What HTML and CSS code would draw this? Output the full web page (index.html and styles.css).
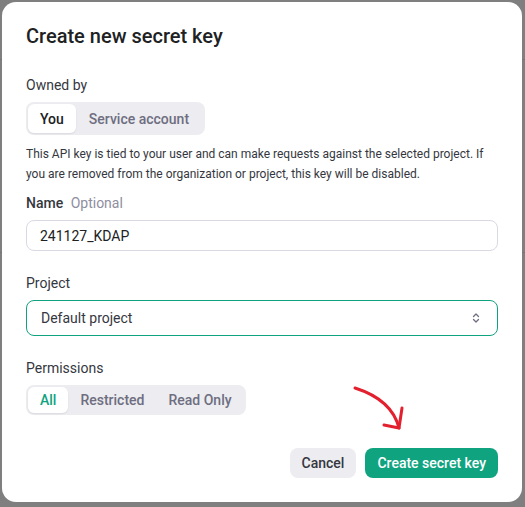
FILE: index.html
```html
<!DOCTYPE html>
<html lang="en">
<head>
<meta charset="utf-8">
<title>Create new secret key</title>
<link rel="stylesheet" href="styles.css">
</head>
<body>
<div class="backdrop">
  <div class="modal">
    <h1 class="title">Create new secret key</h1>

    <div class="field">
      <div class="label">Owned by</div>
      <div class="segmented seg-owner">
        <span class="seg active">You</span>
        <span class="seg">Service account</span>
      </div>
    </div>

    <p class="desc">This API key is tied to your user and can make requests against the selected project. If you are removed from the organization or project, this key will be disabled.</p>

    <div class="field name-field">
      <div class="label">Name <span class="optional">Optional</span></div>
      <div class="input">241127_KDAP</div>
    </div>

    <div class="field project-field">
      <div class="label">Project</div>
      <div class="select">
        <span>Default project</span>
        <svg class="chev" width="10" height="12" viewBox="0 0 10 12" fill="none" stroke="#6e6e80" stroke-width="1.3" stroke-linecap="round" stroke-linejoin="round"><path d="M2.5 4.5 5 2l2.5 2.5"/><path d="M2.5 7.5 5 10l2.5-2.5"/></svg>
      </div>
    </div>

    <div class="field perm-field">
      <div class="label">Permissions</div>
      <div class="segmented seg-perm">
        <span class="seg active green">All</span>
        <span class="seg">Restricted</span>
        <span class="seg">Read Only</span>
      </div>
    </div>

    <div class="actions">
      <button class="btn btn-cancel">Cancel</button>
      <button class="btn btn-primary">Create secret key</button>
    </div>

    <svg class="arrow" width="70" height="60" viewBox="0 0 70 60" fill="none" stroke="#e3202e" stroke-width="3" stroke-linecap="round" stroke-linejoin="round">
      <path d="M3 13 C 25 20, 42 33, 47 53"/>
      <path d="M50 33 L 47 53 L 32 50"/>
    </svg>
  </div>
</div>
</body>
</html>
```

FILE: styles.css
```css
* { box-sizing: border-box; }
html, body { margin: 0; padding: 0; }
body {
  width: 525px;
  height: 507px;
  background-color: #7f7f7f;
  background-image:
    linear-gradient(#767676, #767676),
    linear-gradient(#767676, #767676);
  background-size: 100% 1px, 100% 1px;
  background-position: 0 59px, 0 252px;
  background-repeat: no-repeat;
  font-family: Roboto, "Noto Sans", sans-serif;
  color: #202123;
  overflow: hidden;
}
.backdrop {
  padding: 2px 3px 5px 2px;
}
.modal {
  position: relative;
  width: 520px;
  height: 500px;
  background: #ffffff;
  border-radius: 14px;
  padding: 20px 24px 24px 24px;
  display: flex;
  flex-direction: column;
}
.title {
  margin: 0;
  font-size: 20px;
  line-height: 28px;
  font-weight: 500;
  color: #202123;
}
.field {
  display: flex;
  flex-direction: column;
  gap: 7px;
  margin-top: 25px;
}
.label {
  font-size: 14px;
  line-height: 20px;
  font-weight: 400;
  color: #353740;
}
.optional {
  font-weight: 400;
  color: #8e8ea0;
  margin-left: 4px;
}
.segmented {
  display: inline-flex;
  align-self: flex-start;
  background: #ececf1;
  border-radius: 8px;
  padding: 2px;
}
.seg-owner { height: 33px; }
.seg-perm { height: 30px; }
.seg {
  display: flex;
  align-items: center;
  padding: 0 12px;
  font-size: 14px;
  font-weight: 500;
  color: #6e6e80;
  border-radius: 6px;
}
.seg-owner .seg:nth-child(2) { padding: 0 14px 0 13px; }
.seg.active {
  background: #ffffff;
  color: #202123;
  box-shadow: 0 1px 2px rgba(0,0,0,0.08);
}
.seg.green { color: #10a37f; font-weight: 500; }
.desc {
  margin: 9px 0 0 0;
  font-size: 12px;
  line-height: 20px;
  color: #353740;
}
.name-field { margin-top: 9px; }
.name-field .label { font-weight: 500; }
.project-field, .perm-field { margin-top: 22px; }
.input {
  height: 31px;
  border: 1px solid #d9d9e3;
  border-radius: 8px;
  padding: 0 13px;
  display: flex;
  align-items: center;
  font-size: 14px;
  color: #202123;
}
.select {
  height: 36px;
  border: 1.5px solid #10a37f;
  border-radius: 8px;
  padding: 0 16px 0 14px;
  display: flex;
  align-items: center;
  justify-content: space-between;
  font-size: 14px;
  color: #353740;
}
.actions {
  margin-top: auto;
  display: flex;
  justify-content: flex-end;
  gap: 9px;
}
.btn {
  height: 30px;
  border: none;
  border-radius: 8px;
  padding: 0 12px;
  font-family: inherit;
  font-size: 14px;
  font-weight: 500;
}
.btn-cancel { background: #ececf1; color: #353740; }
.btn-primary { background: #10a37f; color: #ffffff; font-weight: 500; }
.arrow {
  position: absolute;
  left: 350px;
  top: 373px;
}
```
